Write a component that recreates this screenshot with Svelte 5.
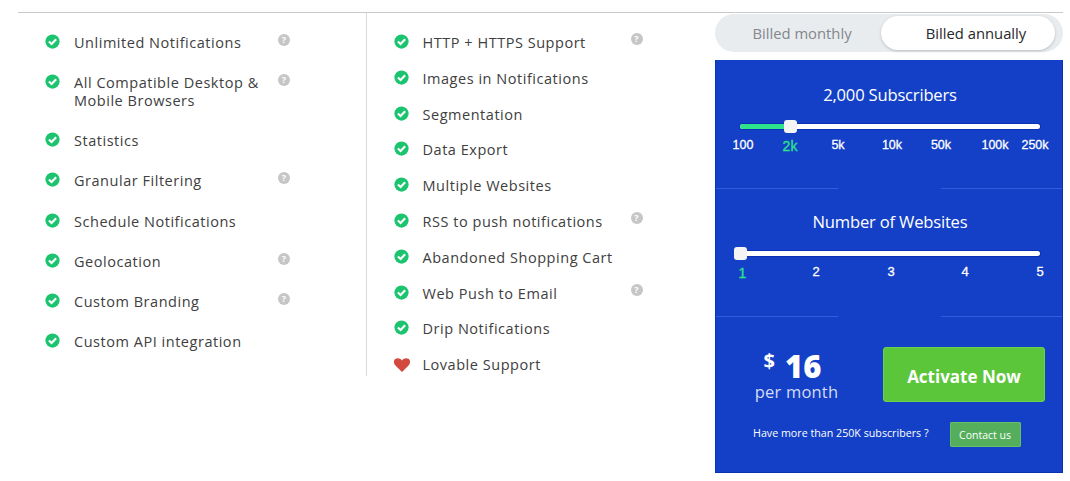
<script>
  const left = [
    { t: 'Unlimited Notifications', q: true },
    { t: 'All Compatible Desktop & Mobile Browsers', q: true },
    { t: 'Statistics' },
    { t: 'Granular Filtering', q: true },
    { t: 'Schedule Notifications' },
    { t: 'Geolocation', q: true },
    { t: 'Custom Branding', q: true },
    { t: 'Custom API integration' }
  ];
  const right = [
    { t: 'HTTP + HTTPS Support', q: true },
    { t: 'Images in Notifications' },
    { t: 'Segmentation' },
    { t: 'Data Export' },
    { t: 'Multiple Websites' },
    { t: 'RSS to push notifications', q: true },
    { t: 'Abandoned Shopping Cart' },
    { t: 'Web Push to Email', q: true },
    { t: 'Drip Notifications' },
    { t: 'Lovable Support', heart: true }
  ];
  const subs = [
    { l: '100', x: 27 },
    { l: '2k', x: 74, on: true },
    { l: '5k', x: 122 },
    { l: '10k', x: 176 },
    { l: '50k', x: 225 },
    { l: '100k', x: 279 },
    { l: '250k', x: 319 }
  ];
  const sites = [
    { l: '1', x: 26.5, on: true },
    { l: '2', x: 100 },
    { l: '3', x: 175 },
    { l: '4', x: 249 },
    { l: '5', x: 324 }
  ];
</script>

{#snippet feature(f)}
  <li class="feature">
    {#if f.heart}
      <svg class="ico heart" viewBox="0 0 16 16" aria-hidden="true">
        <path d="M8 15 1.6 8.6C-.2 6.7.1 3.9 1.9 2.7 3.7 1.5 6.4 1.8 8 4.3c1.6-2.5 4.3-2.8 6.1-1.6 1.8 1.2 2.1 4 .3 5.9Z" fill="#d4493d" />
      </svg>
    {:else}
      <svg class="ico" viewBox="0 0 16 16" aria-hidden="true">
        <circle cx="8" cy="8" r="7.6" fill="#1cc46f" />
        <path d="M4.2 8 7 10.7l4.9-5.1" fill="none" stroke="#fff" stroke-width="2.3" />
      </svg>
    {/if}
    <span class="label">{f.t}</span>
    {#if f.q}<span class="help">?</span>{/if}
  </li>
{/snippet}

{#snippet scale(items)}
  <div class="ticks">
    {#each items as it}
      <span class="tick" class:on={it.on} style="left:{it.x}px">{it.l}</span>
    {/each}
  </div>
{/snippet}

<div class="page">
  <main class="plan">
    <ul class="col first">
      {#each left as f}{@render feature(f)}{/each}
    </ul>
    <ul class="col second">
      {#each right as f}{@render feature(f)}{/each}
    </ul>
    <aside class="side">
      <div class="toggle">
        <span class="opt">Billed monthly</span>
        <span class="opt active">Billed annually</span>
      </div>
      <section class="panel">
        <div class="block b1">
          <h3>2,000 Subscribers</h3>
          <div class="track">
            <div class="fill"></div>
            <div class="knob k1"></div>
          </div>
          {@render scale(subs)}
        </div>
        <div class="rule"></div>
        <div class="block b2">
          <h3>Number of Websites</h3>
          <div class="track">
            <div class="knob k2"></div>
          </div>
          {@render scale(sites)}
        </div>
        <div class="rule"></div>
        <div class="buy">
          <div class="price">
            <div class="amount"><span class="cur">$</span><b>16</b></div>
            <div class="per">per month</div>
          </div>
          <button class="activate">Activate Now</button>
        </div>
        <div class="contact">
          <span class="more">Have more than 250K subscribers ?</span>
          <button class="cbtn">Contact us</button>
        </div>
      </section>
    </aside>
  </main>
</div>

<style>
  :global(body) { margin: 0; background: #fff; }
  .page { width: 1070px; height: 481px; overflow: hidden; padding: 12px 7px 0 18px; box-sizing: border-box; font-family: "Open Sans", sans-serif; }
  .plan { display: flex; border-top: 1px solid #c9c9c9; align-items: flex-start; }
  .col { list-style: none; margin: 0; box-sizing: border-box; }
  .first { width: 349px; height: 363px; border-right: 1px solid #d9d9d9; padding: 20.6px 0 0 27px; }
  .second { width: 349px; padding: 21px 0 0 27px; }
  .feature { position: relative; display: flex; align-items: flex-start; font-size: 14.5px; line-height: 18px; letter-spacing: 0.53px; color: #404040; }
  .first .feature { padding-bottom: 22.26px; }
  .second .feature { padding-bottom: 17.8px; }
  .ico { width: 15px; height: 15px; flex: none; margin: 0 14px 0 0; }
  .heart { width: 18px; height: 17px; margin: 0 12px 0 -1px; }
  .label { width: 190px; }
  .second .label { width: 215px; }
  .help { width: 12px; height: 12px; border-radius: 50%; background: #c6c6c6; color: #fff; font-size: 9px; line-height: 12px; font-weight: 700; text-align: center; letter-spacing: 0; position: absolute; left: 233px; top: 0; }
  .second .help { left: 237px; top: -1px; }
  .side { width: 348px; }
  .toggle { margin-top: 1px; height: 38px; background: #e9ecef; border-radius: 19px; display: flex; align-items: center; padding: 2px 9px 2px 0; box-sizing: border-box; font-size: 14.8px; font-weight: 500; }
  .opt { flex: none; text-align: center; }
  .opt:first-child { width: 166px; padding-left: 8px; box-sizing: border-box; color: #83878b; }
  .active { width: 174px; height: 34px; line-height: 34px; padding-left: 16px; box-sizing: border-box; background: #fff; color: #26282b; border-radius: 17px; box-shadow: 0 1px 3px rgba(0,0,0,.2); }
  .panel { margin-top: 8px; height: 413px; background: #1340c6; border: 1px solid #0a31b4; border-width: 0 1px 1px; box-sizing: border-box; color: #fff; }
  .block { position: relative; text-align: center; }
  .b1 { height: 128px; padding-top: 24px; box-sizing: border-box; }
  .b2 { height: 127px; padding-top: 22px; box-sizing: border-box; }
  h3 { margin: 0 0 18px; padding-left: 2px; font-size: 16.6px; line-height: 22px; font-weight: 400; letter-spacing: -0.2px; }
  .track { position: relative; margin: 0 22px 0 24px; height: 5px; background: #fff; border-radius: 3px; box-shadow: 0 0 0 1px #0a31b4; }
  .fill { position: absolute; left: 0; top: 0; bottom: 0; width: 50px; background: #2de38c; border-radius: 3px 0 0 3px; }
  .knob { position: absolute; top: -4px; width: 13px; height: 13px; background: #f4f4f4; border-radius: 3px; }
  .k1 { left: 44px; }
  .k2 { left: -6px; }
  .ticks { position: relative; height: 16px; margin-top: 8px; font-family: "Liberation Sans", Arial, sans-serif; font-size: 12.5px; font-weight: 400; -webkit-text-stroke: 0.3px #fff; line-height: 16px; }
  .b2 .ticks { margin-top: 8px; font-size: 13px; }
  .tick { position: absolute; top: 0; transform: translateX(-50%); white-space: nowrap; }
  .tick.on { color: #2de38c; -webkit-text-stroke: 0.3px #2de38c; top: 1px; font-size: 14px; }
  .rule { height: 1px; margin: 0; background: linear-gradient(to right, #2f5fe0 0 122px, transparent 122px 225px, #2f5fe0 225px); }
  .buy { display: flex; align-items: flex-start; padding: 30px 0 0 0; }
  .price { width: 161px; margin-right: 6px; text-align: center; margin-top: 4px; }
  .amount { display: flex; justify-content: center; align-items: flex-start; height: 30px; padding-right: 8px; font-weight: 700; }
  .cur { font-size: 20px; line-height: 20px; margin-right: 10px; }
  .amount b { font-size: 31px; line-height: 30px; }
  .per { font-size: 16.5px; line-height: 22px; color: #d5dcf4; letter-spacing: 0.2px; }
  button { font-family: inherit; color: #fff; border: 0; padding: 0; }
  .activate { width: 162px; height: 55px; padding-top: 3px; background: #5cc63a; border-radius: 4px; box-shadow: inset 0 0 0 1px #6bd24a; font-size: 17px; font-weight: 700; letter-spacing: 0; }
  .contact { display: flex; align-items: center; margin: 17px 0 0 37px; font-size: 10.7px; font-weight: 500; letter-spacing: 0; }
  .more { margin-bottom: 2px; }
  .cbtn { width: 71px; height: 25px; margin: 2px 0 0 21px; background: #55ae5c; border-radius: 2px; box-shadow: inset 0 0 0 1px #66bd6a; font-size: 10.5px; font-weight: 500; }
</style>
